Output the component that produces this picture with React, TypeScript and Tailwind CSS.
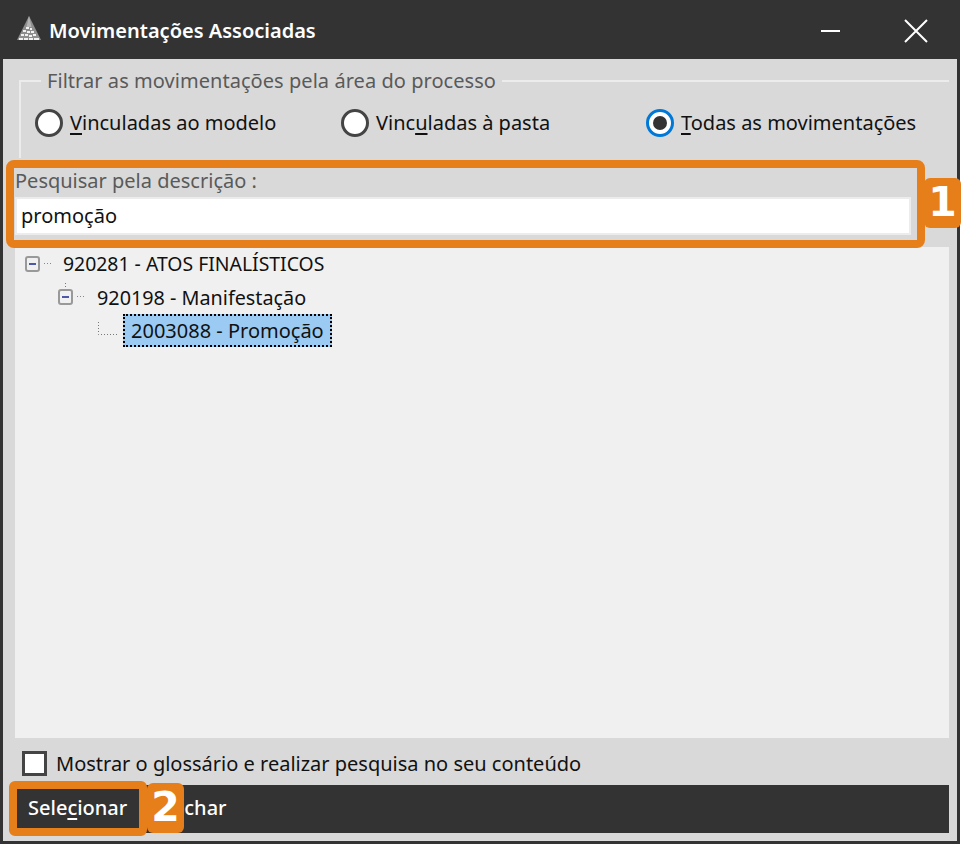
const font = { fontFamily: '"Noto Sans", sans-serif' };

function Logo() {
  return (
    <svg width="26" height="26" viewBox="0 0 26 26" className="mb-[6px] shrink-0">
      <polygon points="13,1 25,25 1,25" fill="#8f8f8f" />
      <polygon points="13,1 15.5,12 10.5,12" fill="#b5b5b5" />
      <g fill="#f2f2f2">
        <rect x="10" y="12" width="3" height="2" />
        <rect x="14" y="13" width="2" height="2" />
        <rect x="7" y="15" width="3" height="2" />
        <rect x="11" y="16" width="3" height="2" />
        <rect x="15" y="16" width="3" height="2" />
        <rect x="5" y="19" width="3" height="2" />
        <rect x="9" y="19" width="3" height="2" />
        <rect x="13" y="20" width="3" height="2" />
        <rect x="17" y="19" width="3" height="2" />
        <rect x="3" y="23" width="4" height="2" />
        <rect x="8" y="23" width="4" height="2" />
        <rect x="13" y="23" width="4" height="2" />
        <rect x="18" y="23" width="5" height="2" />
      </g>
    </svg>
  );
}

function Radio({ checked, children }: { checked?: boolean; children: React.ReactNode }) {
  return (
    <label className="flex items-center gap-[7px] text-[20px] leading-[28px] text-[#111]">
      {checked ? (
        <span className="flex h-[28px] w-[28px] items-center justify-center rounded-full border-[3px] border-[#0078d7] bg-white">
          <span className="h-[14px] w-[14px] rounded-full bg-[#333]" />
        </span>
      ) : (
        <span className="h-[28px] w-[28px] rounded-full border-[3px] border-[#444] bg-white" />
      )}
      <span className="pt-[1px]">{children}</span>
    </label>
  );
}

function TreeToggle({ up }: { up?: boolean }) {
  return (
    <svg width="30" height="30" viewBox="0 0 30 30" className="shrink-0">
      {up && <line x1="10.5" y1="1" x2="10.5" y2="7" stroke="#777" strokeWidth="1" strokeDasharray="1 2" />}
      <rect x="4" y="8" width="13" height="14" rx="2" fill="#f0f0f0" stroke="#999" strokeWidth="2" />
      <line x1="7" y1="15" x2="14" y2="15" stroke="#4a5aa8" strokeWidth="2" />
      <line x1="22" y1="14.5" x2="29" y2="14.5" stroke="#888" strokeWidth="1" strokeDasharray="1 2" />
    </svg>
  );
}

export default function App() {
  return (
    <div className="relative flex h-[844px] w-[960px] flex-col bg-[#333]" style={font}>
      {/* TITLE */}
      <div className="flex h-[59px] shrink-0 items-center pl-[16px] pt-[2px] text-white">
        <Logo />
        <h1 className="ml-[7px] text-[20px] font-semibold">Movimentações Associadas</h1>
        <div className="ml-auto flex items-center gap-[64px] pr-[32px]">
          <div className="h-[2px] w-[19px] bg-white" />
          <svg width="24" height="24" viewBox="0 0 24 24">
            <path d="M1 1 L23 23 M23 1 L1 23" stroke="#fff" strokeWidth="2" />
          </svg>
        </div>
      </div>

      {/* BODY */}
      <div className="mb-[3px] ml-[3px] mr-[3px] flex flex-1 flex-col bg-[#d9d9d9] pl-[12px] pr-[8px] pt-[8px]">
        <fieldset className="ml-[4px] h-[91px] shrink-0 border-l-2 border-t-2 border-[#ececec]">
          <legend className="ml-[20px] px-[6px] text-[20px] leading-[28px] tracking-[0.05px] text-[#5a5a5a]">
            Filtrar as movimentações pela área do processo
          </legend>
          <div className="grid grid-cols-[306px_305px_1fr] pl-[14px] pt-[13px]">
            <Radio>
              <u className="underline-offset-3">V</u>inculadas ao modelo
            </Radio>
            <Radio>
              Vinc<u className="underline-offset-3">u</u>ladas à pasta
            </Radio>
            <Radio checked>
              <u className="underline-offset-3">T</u>odas as movimentações
            </Radio>
          </div>
        </fieldset>

        <div className="mt-[10px] h-[26px] shrink-0 text-[20px] leading-[26px] text-[#5a5a5a]">
          Pesquisar pela descrição :
        </div>
        <div className="mr-[38px] mt-[3px] flex h-[38px] shrink-0 items-center border-2 border-[#ececec] bg-white pl-[4px] text-[20px] text-[#111]">
          promoção
        </div>

        {/* TREE */}
        <div className="mt-[12px] flex-1 bg-[#f0f0f0] pl-[7px] leading-[33px] text-[#111]">
          <div className="flex h-[33px] items-center text-[19.4px]">
            <TreeToggle />
            <span className="ml-[11px]">920281 - ATOS FINALÍSTICOS</span>
          </div>
          <div className="flex h-[34px] items-center pl-[33px] text-[19.8px]">
            <TreeToggle up />
            <span className="ml-[12px]">920198 - Manifestação</span>
          </div>
          <div className="flex h-[33px] items-center pl-[68px] text-[20px]">
            <svg width="33" height="20" viewBox="0 0 33 20" className="shrink-0">
              <path d="M8.5 1 V13.5 H27" fill="none" stroke="#777" strokeDasharray="1 2" />
            </svg>
            <span className="border-2 border-dotted border-black bg-[#9bcbf3] px-[6px] leading-[29px]">
              2003088 - Promoção
            </span>
          </div>
        </div>

        {/* GLOSSARIO */}
        <div className="ml-[7px] mt-[13px] flex h-[25px] shrink-0 items-center gap-[9px] text-[20px] text-[#111]">
          <span className="h-[25px] w-[25px] border-[3px] border-[#444] bg-white" />
          <span className="pt-[1px]">Mostrar o glossário e realizar pesquisa no seu conteúdo</span>
        </div>

        {/* FOOTER */}
        <div className="mb-[8px] mt-[9px] flex h-[48px] shrink-0 items-center bg-[#333] pb-[3px] pl-[13px] text-[20px] font-medium text-white">
          <button>
            Sele<u className="underline-offset-3">c</u>ionar
          </button>
          <button className="ml-[57px]">char</button>
        </div>
      </div>

      {/* DESTAQUES */}
      <div className="absolute left-[6px] top-[160px] h-[88px] w-[919px] rounded-[8px] border-[8px] border-[#e67e1a]" />
      <div className="absolute left-[924px] top-[178px] flex h-[50px] w-[37px] items-center justify-center rounded-[6px] bg-[#e67e1a] text-[41px] font-bold text-white" style={{ fontFamily: '"DejaVu Sans", sans-serif' }}>
        1
      </div>
      <div className="absolute left-[9px] top-[781px] h-[55px] w-[138px] rounded-[6px] border-[8px] border-[#e67e1a]" />
      <div className="absolute left-[147px] top-[783px] flex h-[50px] w-[37px] items-center justify-center rounded-[6px] bg-[#e67e1a] text-[41px] font-bold text-white" style={{ fontFamily: '"DejaVu Sans", sans-serif' }}>
        2
      </div>
    </div>
  );
}
